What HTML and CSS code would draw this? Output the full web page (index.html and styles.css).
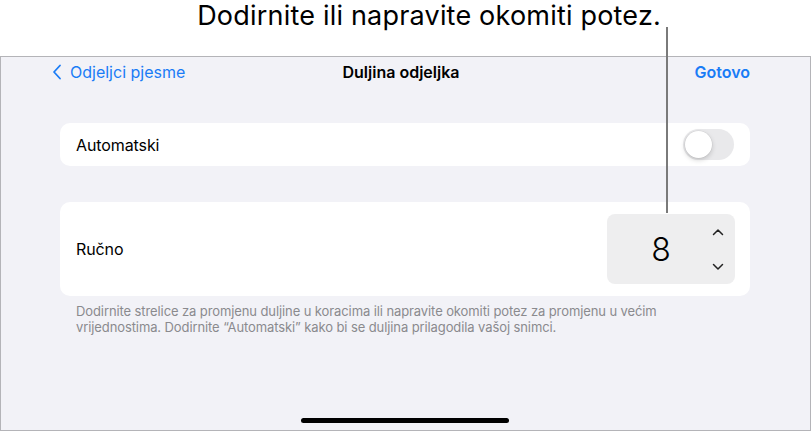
FILE: index.html
```html
<!DOCTYPE html>
<html>
<head>
<meta charset="utf-8">
<link rel="stylesheet" href="styles.css">
</head>
<body>
<div class="page">
  <div class="callout">
    <span class="callout-text">Dodirnite ili napravite okomiti potez.</span>
  </div>
  <div class="leader"></div>
  <div class="frame">
    <div class="nav">
      <div class="nav-back">
        <svg class="chev-left" width="10" height="16" viewBox="0 0 10 16"><path d="M8 1.5 L2 8 L8 14.5" fill="none" stroke="#1a7cf6" stroke-width="1.8" stroke-linecap="round" stroke-linejoin="round"/></svg>
        <span>Odjeljci pjesme</span>
      </div>
      <div class="nav-title">Duljina odjeljka</div>
      <div class="nav-done">Gotovo</div>
    </div>
    <div class="card card-auto">
      <span class="label">Automatski</span>
      <div class="toggle"><div class="knob"></div></div>
    </div>
    <div class="card card-manual">
      <span class="label">Ručno</span>
      <div class="stepper">
        <span class="value">8</span>
        <div class="arrows">
          <svg width="12" height="8" viewBox="0 0 12 8"><path d="M1.5 6.5 L6 2 L10.5 6.5" fill="none" stroke="#222" stroke-width="1.5" stroke-linecap="round" stroke-linejoin="round"/></svg>
          <svg width="12" height="8" viewBox="0 0 12 8"><path d="M1.5 1.5 L6 6 L10.5 1.5" fill="none" stroke="#222" stroke-width="1.5" stroke-linecap="round" stroke-linejoin="round"/></svg>
        </div>
      </div>
    </div>
    <p class="note">Dodirnite strelice za promjenu duljine u koracima ili napravite okomiti potez za promjenu u većim vrijednostima. Dodirnite “Automatski” kako bi se duljina prilagodila vašoj snimci.</p>
    <div class="home"></div>
  </div>
</div>
</body>
</html>
```

FILE: styles.css
```css
* { box-sizing: border-box; }
html, body { margin: 0; padding: 0; }
body {
  width: 811px;
  height: 431px;
  overflow: hidden;
  background: #ffffff;
  font-family: Inter, "Noto Sans", sans-serif;
  color: #000;
}
.page {
  position: relative;
  width: 811px;
  height: 431px;
  display: flex;
  flex-direction: column;
}
.callout {
  height: 56px;
  display: flex;
  justify-content: flex-end;
  align-items: flex-start;
  padding-right: 150px;
}
.callout-text {
  font-size: 27px;
  line-height: 33px;
  letter-spacing: 0.2px;
  font-weight: 400;
  margin-top: -1px;
}
.leader {
  position: absolute;
  left: 666px;
  top: 27px;
  width: 2px;
  height: 186px;
  background: #7a7a7a;
  z-index: 2;
}
.frame {
  flex: 1;
  background: #f2f2f7;
  border: 1px solid #b4b4b8;
  display: flex;
  flex-direction: column;
  padding: 0 60px 0 59px;
}
.nav {
  height: 30px;
  display: flex;
  align-items: center;
  justify-content: space-between;
  font-size: 16px;
}
.nav-back {
  display: flex;
  align-items: center;
  gap: 8px;
  color: #1a7cf6;
  width: 160px;
  margin-left: -8px;
}
.nav-title {
  font-weight: 600;
}
.nav-done {
  color: #1a7cf6;
  font-weight: 600;
  width: 160px;
  text-align: right;
}
.card {
  background: #ffffff;
  border-radius: 10px;
  display: flex;
  align-items: center;
  justify-content: space-between;
  padding: 0 16px;
}
.label {
  font-size: 16px;
  letter-spacing: -0.1px;
}
.card-auto {
  margin-top: 36px;
  height: 43px;
}
.toggle {
  width: 51px;
  height: 31px;
  border-radius: 16px;
  background: #e9e9eb;
  padding: 2px;
}
.knob {
  width: 27px;
  height: 27px;
  border-radius: 50%;
  background: #fff;
  box-shadow: 0 2px 5px rgba(0,0,0,0.18), 0 0 0 0.5px rgba(0,0,0,0.06);
}
.card-manual {
  margin-top: 36px;
  height: 94px;
  padding-right: 15px;
}
.stepper {
  width: 128px;
  height: 70px;
  background: #eeeeef;
  border-radius: 8px;
  display: flex;
  align-items: center;
  justify-content: space-between;
  padding: 0 11px 0 42px;
}
.value {
  font-size: 32px;
  font-weight: 300;
  width: 24px;
  text-align: center;
}
.arrows {
  display: flex;
  flex-direction: column;
  justify-content: space-between;
  height: 43px;
}
.note {
  margin: 7px 0 0 0;
  padding: 0 16px;
  font-size: 13px;
  line-height: 16px;
  letter-spacing: -0.1px;
  color: #8a8a8e;
}
.home {
  margin: auto auto 7px auto;
  width: 208px;
  height: 5px;
  border-radius: 3px;
  background: #000;
}
```
